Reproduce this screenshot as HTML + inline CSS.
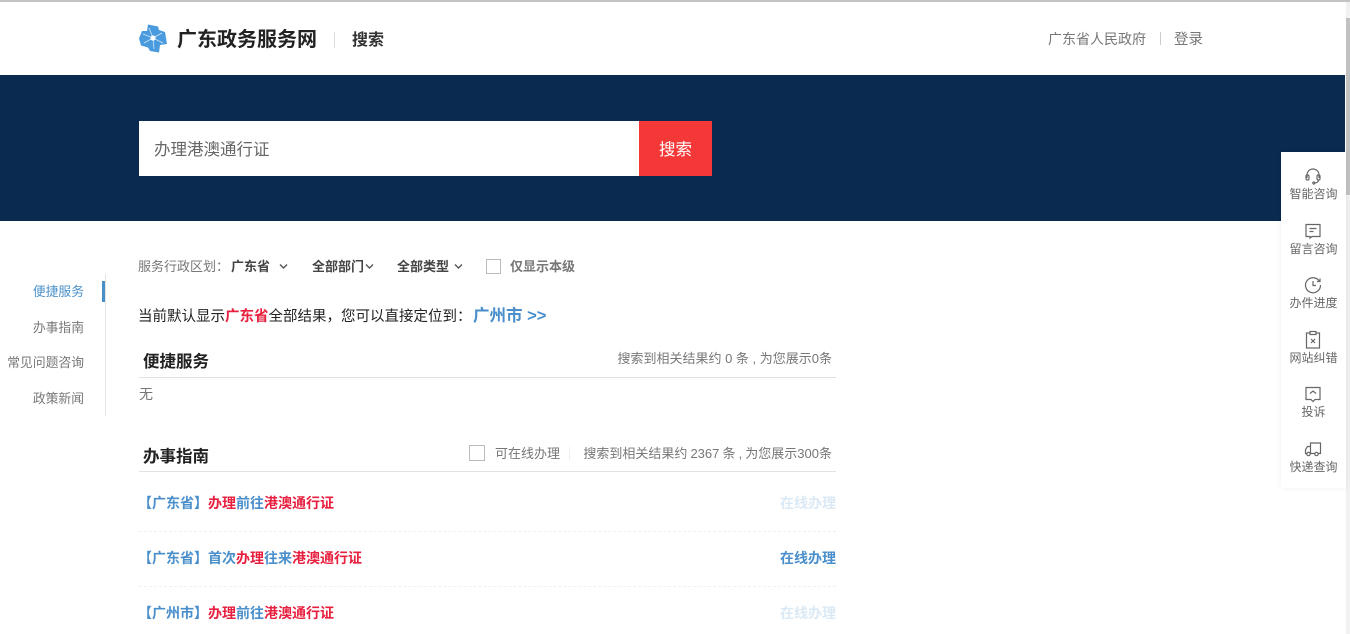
<!DOCTYPE html>
<html lang="zh-CN">
<head>
<meta charset="utf-8">
<title>广东政务服务网 搜索</title>
<style>
*{margin:0;padding:0;box-sizing:border-box}
html,body{width:1350px;height:634px;overflow:hidden;background:#fff}
body{position:relative;font-family:"Liberation Sans","Noto Sans CJK SC",sans-serif;font-size:13px;color:#666}
.a{position:absolute;white-space:nowrap}
.r{color:#e8203f}
.b{color:#4a8fcb}
.bd{font-weight:bold}
.g{color:#777}
.cb{position:absolute;width:16px;height:16px;border:1px solid #bbb;background:#fff}
.line{position:absolute;height:1px;background:#e2e2e2}
.dash{position:absolute;height:1px;left:139px;width:697px;border-top:1px dashed #f0f0f0}
.side{position:absolute;left:1281px;top:152px;width:65px;height:336px;background:#fff;box-shadow:0 0 6px rgba(0,0,0,.06)}
.side .t{position:absolute;left:0;width:65px;text-align:center;font-size:12px;color:#666;line-height:16px}
.side svg{position:absolute;left:22px;width:20px;height:20px;fill:none;stroke:#666;stroke-width:1.2}
.nav{position:absolute;right:1266px;font-size:12.8px;color:#777;line-height:18px;white-space:nowrap}
</style>
</head>
<body>
<div class="a" style="left:0;top:0;width:1350px;height:2px;background:#c4c4c4"></div>

<!-- scrollbar -->
<div class="a" style="left:1346px;top:2px;width:4px;height:632px;background:#f1f1f1"></div>
<div class="a" style="left:1346px;top:18px;width:4px;height:177px;background:#c1c1c1"></div>

<!-- logo -->
<svg class="a" style="left:139px;top:24px" width="28" height="29" viewBox="0 0 28 29">
<path fill="#4a9ade" d="M9 0.500L19 2.500L20 6L26 8L27 14L28 20L21 21L20 28.500L11 27L9 23.500L2 21.500L0 14.500L3 7L8 7Z"/>
<g stroke="#cfe5f7" stroke-width=".8" fill="none"><path d="M14 14L10 4M14 14L23 9M14 14L24 19M14 14L15 25M14 14L5 19M14 14L4 10"/></g>
<circle cx="14" cy="14" r="2.600" fill="#fff"/>
</svg>
<div class="a" style="left:177px;top:26px;font-size:20px;line-height:28px;font-weight:bold;color:#222">广东政务服务网</div>
<div class="a" style="left:334px;top:32px;width:1px;height:16px;background:#ddd"></div>
<div class="a" style="left:352px;top:30px;font-size:16px;line-height:22px;font-weight:bold;color:#333">搜索</div>
<div class="a g" style="left:1048px;top:30px;line-height:18px;font-size:14px">广东省人民政府</div>
<div class="a" style="left:1160px;top:32px;width:1px;height:13px;background:#ccc"></div>
<div class="a g" style="left:1174px;top:31px;line-height:18px;font-size:14.500px">登录</div>

<!-- banner -->
<div class="a" style="left:0;top:75px;width:1345px;height:146px;background:#0a2a4f"></div>
<div class="a" style="left:139px;top:121px;width:500px;height:55px;background:#fff"></div>
<div class="a" style="left:154px;top:123px;line-height:55px;font-size:16.500px;color:#666">办理港澳通行证</div>
<div class="a" style="left:639px;top:121px;width:73px;height:55px;background:#f43838"></div>
<div class="a" style="left:639px;top:123px;width:73px;color:#fff;font-size:16.500px;line-height:55px;text-align:center">搜索</div>

<!-- left nav -->
<div class="a" style="left:105px;top:274px;width:1px;height:142px;background:#e4e4e4"></div>
<div class="a" style="left:102px;top:281px;width:3px;height:21px;background:#4a90c8"></div>
<div class="nav" style="top:283px;color:#4a90c8">便捷服务</div>
<div class="nav" style="top:319px">办事指南</div>
<div class="nav" style="top:354px">常见问题咨询</div>
<div class="nav" style="top:390px">政策新闻</div>

<!-- filters -->
<div class="a" style="left:138px;top:258px;line-height:18px;color:#777">服务行政区划：</div>
<div class="a bd" style="left:231px;top:258px;line-height:18px;color:#444">广东省</div>
<svg class="a" style="left:279px;top:263px" width="9" height="7" viewBox="0 0 9 7"><path d="M1 1.500L4.500 5L8 1.500" fill="none" stroke="#555" stroke-width="1.400"/></svg>
<div class="a bd" style="left:312px;top:258px;line-height:18px;color:#444">全部部门</div>
<svg class="a" style="left:365px;top:263px" width="9" height="7" viewBox="0 0 9 7"><path d="M1 1.500L4.500 5L8 1.500" fill="none" stroke="#555" stroke-width="1.400"/></svg>
<div class="a bd" style="left:397px;top:258px;line-height:18px;color:#444">全部类型</div>
<svg class="a" style="left:454px;top:263px" width="9" height="7" viewBox="0 0 9 7"><path d="M1 1.500L4.500 5L8 1.500" fill="none" stroke="#555" stroke-width="1.400"/></svg>
<div class="cb" style="left:486px;top:259px;width:15px;height:15px"></div>
<div class="a bd" style="left:510px;top:258px;line-height:18px;color:#777">仅显示本级</div>

<!-- notice -->
<div class="a" style="left:138px;top:307px;font-size:14.500px;line-height:20px;color:#222">当前默认显示<span class="r bd">广东省</span>全部结果，您可以直接定位到：</div>
<div class="a b bd" style="left:473px;top:306px;font-size:16.500px;line-height:21px">广州市 &gt;&gt;</div>

<!-- section 1 -->
<div class="a bd" style="left:143px;top:351px;font-size:16.500px;line-height:22px;color:#222">便捷服务</div>
<div class="a g" style="right:518px;top:350px;line-height:18px">搜索到相关结果约 0 条 , 为您展示0条</div>
<div class="line" style="left:139px;top:377px;width:697px"></div>
<div class="a g" style="left:139px;top:385px;font-size:14px;line-height:18px">无</div>

<!-- section 2 -->
<div class="a bd" style="left:143px;top:446px;font-size:16.500px;line-height:22px;color:#222">办事指南</div>
<div class="cb" style="left:469px;top:445px"></div>
<div class="a g" style="left:495px;top:445px;line-height:18px">可在线办理</div>
<div class="a" style="left:569px;top:447px;width:1px;height:13px;background:#eee"></div>
<div class="a g" style="right:518px;top:445px;line-height:18px;word-spacing:-.5px">搜索到相关结果约 2367 条 , 为您展示300条</div>
<div class="line" style="left:139px;top:471px;width:697px"></div>

<div class="a b bd" style="left:138px;top:494px;line-height:18px;font-size:14px">【广东省】<span class="r">办理</span>前往<span class="r">港澳通行证</span></div>
<div class="a bd" style="right:514px;top:494px;line-height:18px;font-size:14px;color:#dbe9f5">在线办理</div>
<div class="dash" style="top:531px"></div>
<div class="a b bd" style="left:138px;top:549px;line-height:18px;font-size:14px">【广东省】首次<span class="r">办理</span>往来<span class="r">港澳通行证</span></div>
<div class="a b bd" style="right:514px;top:549px;line-height:18px;font-size:14px">在线办理</div>
<div class="dash" style="top:586px"></div>
<div class="a b bd" style="left:138px;top:604px;line-height:18px;font-size:14px">【广州市】<span class="r">办理</span>前往<span class="r">港澳通行证</span></div>
<div class="a bd" style="right:514px;top:604px;line-height:18px;font-size:14px;color:#dbe9f5">在线办理</div>

<!-- side tools -->
<div class="side">
<svg style="top:14px" viewBox="0 0 20 20"><path d="M4 12V9a6 6 0 0 1 12 0v3"/><rect x="3" y="9" width="3" height="5" rx="1.200"/><rect x="14" y="9" width="3" height="5" rx="1.200"/><path d="M15.500 14c0 2-2 3-4 3"/><circle cx="10.800" cy="17" r="1"/></svg>
<div class="t" style="top:34px">智能咨询</div>
<svg style="top:69px" viewBox="0 0 20 20"><path d="M3 3.500h14v12H9l-2 1.500v-1.500H3z"/><path d="M6.500 7.500h7M6.500 10.500h4"/></svg>
<div class="t" style="top:89px">留言咨询</div>
<svg style="top:123px" viewBox="0 0 20 20"><path d="M16.500 6.500A7.500 7.500 0 1 0 17.500 10"/><path d="M14 6.500h3v-3"/><path d="M10 6v4.500h3"/></svg>
<div class="t" style="top:143px">办件进度</div>
<svg style="top:178px" viewBox="0 0 20 20"><rect x="3.500" y="3" width="13" height="15"/><rect x="7" y="1.500" width="6" height="3" fill="#fff"/><path d="M8 9l4 4M12 9l-4 4"/></svg>
<div class="t" style="top:198px">网站纠错</div>
<svg style="top:232px" viewBox="0 0 20 20"><path d="M3 3.500h14v12h-5l-2 2-2-2H3z"/><path d="M7 9.500l3-2.500 3 2.500"/></svg>
<div class="t" style="top:252px">投诉</div>
<svg style="top:287px" viewBox="0 0 20 20"><path d="M7.500 4h10v10.500h-10z"/><path d="M7.500 7.500H4.500L2.500 10.500v4h5"/><circle cx="5.500" cy="15" r="1.700" fill="#fff"/><circle cx="13.500" cy="15" r="1.700" fill="#fff"/></svg>
<div class="t" style="top:307px">快递查询</div>
</div>
</body>
</html>
